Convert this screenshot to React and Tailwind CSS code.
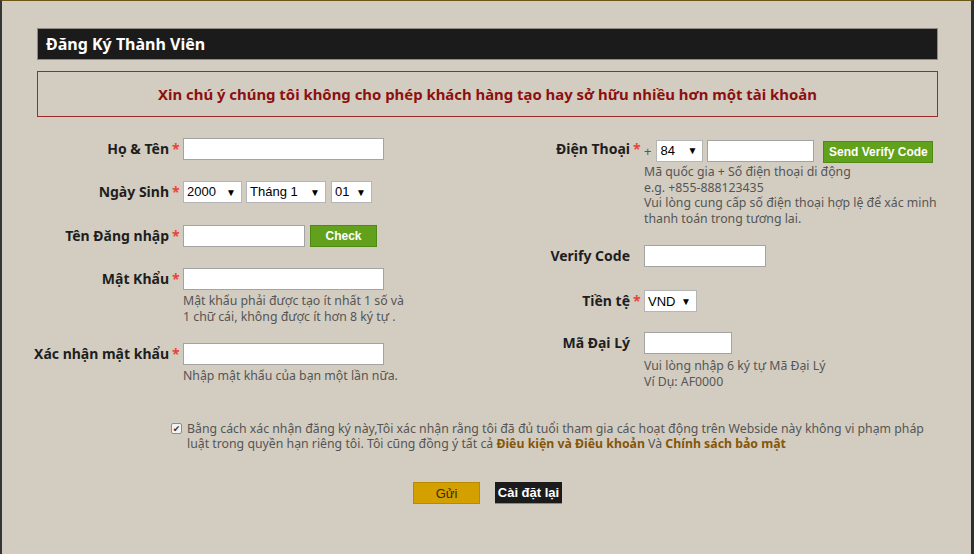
const labelFont = { fontFamily: '"Noto Sans", "DejaVu Sans", sans-serif' };

const Star = ({ show = true }) => (
  <span className="w-[14px] shrink-0 pl-[3px] text-[14px] font-bold leading-[22px] text-[#e8433b]">
    {show ? "*" : ""}
  </span>
);

const Label = ({ children, width, star = true }) => (
  <div className="flex shrink-0 items-start">
    <span
      className="flex shrink-0 justify-end whitespace-nowrap text-[14px] font-bold leading-[22px] text-[#1e1e1e]"
      style={{ width }}
    >
      {children}
    </span>
    <Star show={star} />
  </div>
);

const TextBox = ({ w }) => (
  <div className={`h-[22px] shrink-0 border border-[#a3a3a3] bg-white ${w}`} />
);

const Select = ({ value, w }) => (
  <div
    className={`flex h-[22px] shrink-0 items-center justify-between border border-[#b5b5b5] bg-white pl-[3px] pr-[5px] font-['Liberation_Sans',Arial,sans-serif] text-[13px] text-black ${w}`}
  >
    <span>{value}</span>
    <span className="text-[10px]">▼</span>
  </div>
);

const GreenButton = ({ children, w }) => (
  <button
    type="button"
    className={`h-[22px] shrink-0 border border-[#4f8a12] bg-[#62a11b] font-['Liberation_Sans',Arial,sans-serif] text-[12px] font-bold text-white ${w}`}
  >
    {children}
  </button>
);

export default function App() {
  return (
    <div
      className="h-[554px] w-[974px] overflow-hidden border-t border-l-2 border-r-[3px] border-t-[#6b5616] border-l-[#363636] border-r-[#2e2e2e] bg-[#d3cdc1]"
      style={labelFont}
    >
      <div className="ml-[35px] mt-[27px] w-[901px]">
        <div className="flex h-[32px] items-center border border-[#8f8a82] bg-[#1b1b1b] pl-[8px] text-[16px] font-bold text-white">
          Đăng Ký Thành Viên
        </div>

        <div className="mt-[11px] flex h-[46px] items-center justify-center border border-[#9b2b2b] text-[14.9px] font-bold text-[#8c1010]">
          Xin chú ý chúng tôi không cho phép khách hàng tạo hay sở hữu nhiều hơn một tài khoản
        </div>

        <div className="mt-[21px] flex">
          <div className="flex w-[460px] flex-col">
            <div className="flex">
              <Label width="132px">Họ &amp; Tên</Label>
              <TextBox w="w-[201px]" />
            </div>
            <div className="mt-[21px] flex">
              <Label width="132px">Ngày Sinh</Label>
              <div className="flex gap-[4px]">
                <Select value="2000" w="w-[59px]" />
                <Select value="Tháng 1" w="w-[80px]" />
                <div className="ml-[1px]">
                  <Select value="01" w="w-[41px]" />
                </div>
              </div>
            </div>
            <div className="mt-[22px] flex">
              <Label width="132px">Tên Đăng nhập</Label>
              <div className="flex gap-[5px]">
                <TextBox w="w-[122px]" />
                <GreenButton w="w-[67px]">Check</GreenButton>
              </div>
            </div>
            <div className="mt-[21px] flex">
              <Label width="132px">Mật Khẩu</Label>
              <div>
                <TextBox w="w-[201px]" />
                <div className="mt-[3px] text-[12.3px] leading-[16px] text-[#555]">
                  Mật khẩu phải được tạo ít nhất 1 số và
                  <br />1 chữ cái, không được ít hơn 8 ký tự .
                </div>
              </div>
            </div>
            <div className="mt-[18px] flex">
              <Label width="132px">Xác nhận mật khẩu</Label>
              <div>
                <TextBox w="w-[201px]" />
                <div className="mt-[3px] text-[12.3px] leading-[16px] text-[#555]">
                  Nhập mật khẩu của bạn một lần nữa.
                </div>
              </div>
            </div>
          </div>

          <div className="flex flex-col">
            <div className="flex">
              <Label width="133px">Điện Thoại</Label>
              <div>
                <div className="flex items-center">
                  <span className="mr-[5px] text-[13px] leading-[22px] text-[#555]">+</span>
                  <Select value="84" w="w-[47px]" />
                  <div className="ml-[4px]">
                    <TextBox w="w-[107px]" />
                  </div>
                  <div className="ml-[9px]">
                    <GreenButton w="w-[110px]">Send Verify Code</GreenButton>
                  </div>
                </div>
                <div className="mt-[1px] text-[12.3px] leading-[15.6px] text-[#555]">
                  Mã quốc gia + Số điện thoại di động
                  <br />
                  e.g. +855-888123435
                  <br />
                  Vui lòng cung cấp số điện thoại hợp lệ để xác minh
                  <br />
                  thanh toán trong tương lai.
                </div>
              </div>
            </div>
            <div className="mt-[19px] flex">
              <Label width="133px" star={false}>
                Verify Code
              </Label>
              <TextBox w="w-[122px]" />
            </div>
            <div className="mt-[23px] flex">
              <Label width="133px">Tiền tệ</Label>
              <Select value="VND" w="w-[53px]" />
            </div>
            <div className="mt-[20px] flex">
              <Label width="133px" star={false}>
                Mã Đại Lý
              </Label>
              <div>
                <TextBox w="w-[88px]" />
                <div className="mt-[4px] text-[12.3px] leading-[16px] text-[#555]">
                  Vui lòng nhập 6 ký tự Mã Đại Lý
                  <br />
                  Ví Dụ: AF0000
                </div>
              </div>
            </div>
          </div>
        </div>

        <div className="ml-[134px] mt-[31px] flex items-start gap-[5px]">
          <div className="mt-[2px] flex h-[11px] w-[11px] shrink-0 items-center justify-center rounded-[2px] border border-[#8c8c8c] bg-[#f2f2f2] text-[9px] leading-none text-[#333]">
            ✔
          </div>
          <p className="text-[12.3px] leading-[15px] text-[#555]">
            Bằng cách xác nhận đăng ký này,Tôi xác nhận rằng tôi đã đủ tuổi tham gia các hoạt động trên Webside này không vi phạm pháp
            <br />
            luật trong quyền hạn riêng tôi. Tôi cũng đồng ý tất cả{" "}
            <span className="font-bold text-[#86560a]">Điêu kiện và Điêu khoản</span> Và{" "}
            <span className="font-bold text-[#86560a]">Chính sách bảo mật</span>
          </p>
        </div>

        <div className="mt-[31px] flex justify-center gap-[15px]">
          <button
            type="button"
            className="h-[22px] w-[67px] border border-[#b88a00] bg-[#d4a000] font-['Liberation_Sans',Arial,sans-serif] text-[13px] text-[#3a2a00]"
          >
            Gửi
          </button>
          <button
            type="button"
            className="h-[22px] w-[67px] border-b border-b-[#8a8a8a] bg-[#1b1b1b] font-['Liberation_Sans',Arial,sans-serif] text-[13px] font-bold text-white"
          >
            Cài đặt lại
          </button>
        </div>
      </div>
    </div>
  );
}
